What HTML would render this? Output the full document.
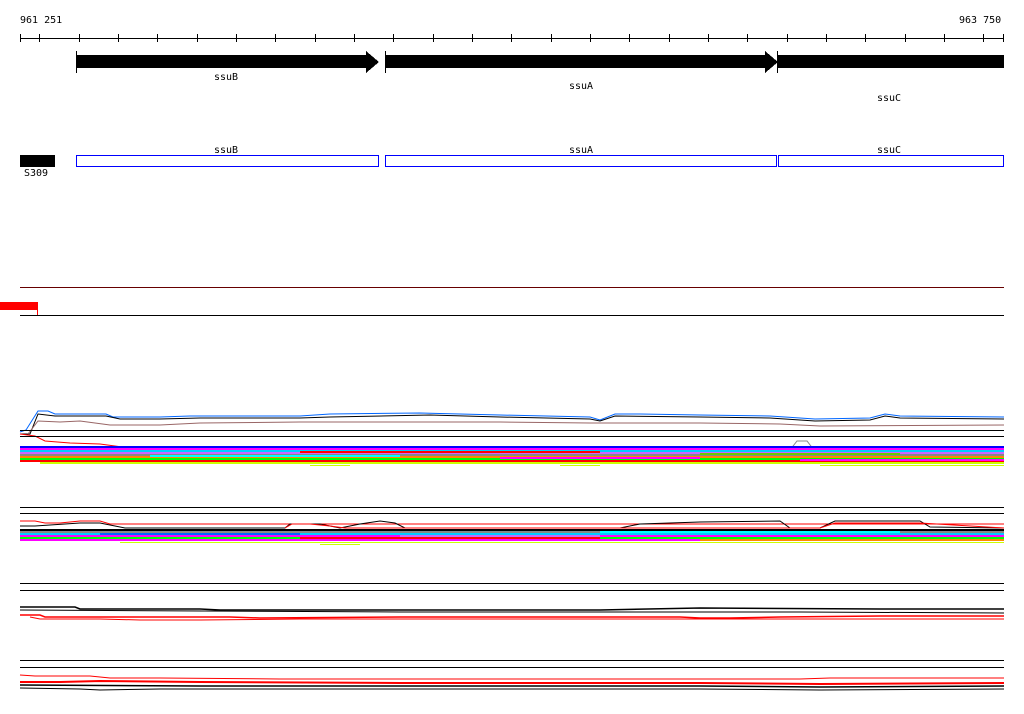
<!DOCTYPE html>
<html><head><meta charset="utf-8"><style>
html,body{margin:0;padding:0;background:#fff;width:1024px;height:714px;overflow:hidden}
svg{display:block}
text{font-family:"DejaVu Sans Mono","Liberation Mono",monospace;font-size:10px;fill:#000}
</style></head><body>
<svg width="1024" height="714" xmlns="http://www.w3.org/2000/svg" shape-rendering="crispEdges">
<text x="20" y="23">961 251</text>
<text x="959" y="23">963 750</text>
<line x1="20" y1="38.5" x2="1004" y2="38.5" stroke="#000"/>
<g stroke="#000">
<line x1="20.5" y1="34" x2="20.5" y2="42"/><line x1="39.5" y1="34" x2="39.5" y2="42"/>
<line x1="79.5" y1="34" x2="79.5" y2="42"/><line x1="118.5" y1="34" x2="118.5" y2="42"/>
<line x1="157.5" y1="34" x2="157.5" y2="42"/><line x1="197.5" y1="34" x2="197.5" y2="42"/>
<line x1="236.5" y1="34" x2="236.5" y2="42"/><line x1="275.5" y1="34" x2="275.5" y2="42"/>
<line x1="315.5" y1="34" x2="315.5" y2="42"/><line x1="354.5" y1="34" x2="354.5" y2="42"/>
<line x1="393.5" y1="34" x2="393.5" y2="42"/><line x1="433.5" y1="34" x2="433.5" y2="42"/>
<line x1="472.5" y1="34" x2="472.5" y2="42"/><line x1="511.5" y1="34" x2="511.5" y2="42"/>
<line x1="551.5" y1="34" x2="551.5" y2="42"/><line x1="590.5" y1="34" x2="590.5" y2="42"/>
<line x1="629.5" y1="34" x2="629.5" y2="42"/><line x1="669.5" y1="34" x2="669.5" y2="42"/>
<line x1="708.5" y1="34" x2="708.5" y2="42"/><line x1="747.5" y1="34" x2="747.5" y2="42"/>
<line x1="787.5" y1="34" x2="787.5" y2="42"/><line x1="826.5" y1="34" x2="826.5" y2="42"/>
<line x1="865.5" y1="34" x2="865.5" y2="42"/><line x1="905.5" y1="34" x2="905.5" y2="42"/>
<line x1="944.5" y1="34" x2="944.5" y2="42"/><line x1="983.5" y1="34" x2="983.5" y2="42"/>
<line x1="1003.5" y1="34" x2="1003.5" y2="42"/>
</g>
<!-- genes -->
<line x1="76.5" y1="51" x2="76.5" y2="73" stroke="#000"/>
<polygon points="76,55 366,55 366,51 379,62 366,73 366,68 76,68" fill="#000"/>
<line x1="385.5" y1="51" x2="385.5" y2="73" stroke="#000"/>
<polygon points="385,55 765,55 765,51 778,62 765,73 765,68 385,68" fill="#000"/>
<line x1="777.5" y1="51" x2="777.5" y2="73" stroke="#000"/>
<rect x="777" y="55" width="227" height="13" fill="#000"/>
<text x="214" y="80">ssuB</text>
<text x="569" y="89">ssuA</text>
<text x="877" y="101">ssuC</text>
<text x="214" y="153">ssuB</text>
<text x="569" y="153">ssuA</text>
<text x="877" y="153">ssuC</text>
<g fill="none" stroke="#00f">
<rect x="76.5" y="155.5" width="302" height="11"/>
<rect x="385.5" y="155.5" width="391" height="11"/>
<rect x="778.5" y="155.5" width="225" height="11"/>
</g>
<rect x="20" y="155" width="35" height="12" fill="#000"/>
<text x="24" y="176">S309</text>
<line x1="20" y1="287.5" x2="1004" y2="287.5" stroke="#600"/>
<rect x="0" y="302" width="38" height="8" fill="#f00"/>
<line x1="37.5" y1="302" x2="37.5" y2="315" stroke="#f00"/>
<line x1="20" y1="315.5" x2="1004" y2="315.5" stroke="#000"/>
<!-- graph 1 -->
<g fill="none" shape-rendering="auto" stroke-width="1">
<polyline stroke="#06f" points="20,432 26,430 38,411 48,411 55,414 106,414 113,417 160,417 190,416 300,416 330,414 420,413 500,415 590,417 600,420 615,414 640,414 700,415 770,416 815,419 870,418 885,414 900,416 1004,417"/>
<polyline stroke="#000" points="20,434 30,434 38,414 55,416 106,416 120,419 160,419 200,418 300,418 330,417 430,415 500,417 590,419 600,421 615,416 700,417 770,418 815,421 870,420 885,416 900,418 1004,419"/>
<polyline stroke="#966" points="28,434 38,421 60,422 80,421 110,425 160,425 200,423 300,422 500,422 590,423 700,423 780,424 820,426 1004,425"/>
<polyline stroke="#f00" points="20,434 35,436 45,441 70,443 100,444 130,448 200,450 300,451 380,451 500,452 700,452 800,453 1004,453"/>
<polyline stroke="#888" points="790,450 797,441 807,441 814,450"/>
</g>
<line x1="20" y1="430.5" x2="1004" y2="430.5" stroke="#000"/>
<line x1="20" y1="436.5" x2="1004" y2="436.5" stroke="#000"/>
<g stroke-width="2">
<line x1="20" y1="447" x2="1004" y2="447" stroke="#00f"/>
<line x1="20" y1="449" x2="1004" y2="449" stroke="#f0f"/>
<line x1="20" y1="451" x2="1004" y2="451" stroke="#0cf"/>
<line x1="20" y1="453" x2="1004" y2="453" stroke="#c6f"/>
<line x1="20" y1="455" x2="1004" y2="455" stroke="#888"/>
<line x1="20" y1="457" x2="1004" y2="457" stroke="#f80"/>
<line x1="20" y1="459" x2="1004" y2="459" stroke="#0f0"/>
<line x1="20" y1="461" x2="1004" y2="461" stroke="#f00"/>
<line x1="150" y1="456" x2="400" y2="456" stroke="#0ff"/>
<line x1="500" y1="458" x2="700" y2="458" stroke="#f0f"/>
<line x1="700" y1="454" x2="900" y2="454" stroke="#6c0"/>
<line x1="300" y1="452" x2="600" y2="452" stroke="#f00"/>
<line x1="800" y1="460" x2="1004" y2="460" stroke="#f0f"/>
<line x1="40" y1="463" x2="1004" y2="463" stroke="#cf0"/>
</g>
<line x1="310" y1="465.5" x2="350" y2="465.5" stroke="#cf0"/>
<line x1="560" y1="465.5" x2="600" y2="465.5" stroke="#cf0"/>
<line x1="820" y1="465.5" x2="1004" y2="465.5" stroke="#cf0"/>
<!-- graph 2 -->
<line x1="20" y1="507.5" x2="1004" y2="507.5" stroke="#000"/>
<line x1="20" y1="513.5" x2="1004" y2="513.5" stroke="#000"/>
<g fill="none" shape-rendering="auto">
<polyline stroke="#f00" points="20,521 35,521 45,523 60,523 80,521 100,521 110,524 1004,524"/>
<polyline stroke="#000" points="20,526 35,526 80,523 100,523 115,526 125,528 285,528 290,524 320,524 340,528 360,524 380,521 395,523 405,528 620,528 640,524 700,522 780,521 790,528 820,528 835,521 920,521 930,527 1004,528"/>
<polyline stroke="#f00" points="285,528 292,524 310,524 330,526 345,528 620,528 790,528 820,528 835,523 920,523 1004,528"/>
</g>
<g stroke-width="2">
<line x1="20" y1="530" x2="1004" y2="530" stroke="#000"/>
<line x1="20" y1="532" x2="1004" y2="532" stroke="#888"/>
<line x1="20" y1="534" x2="1004" y2="534" stroke="#0cf"/>
<line x1="20" y1="536" x2="1004" y2="536" stroke="#f0f"/>
<line x1="20" y1="538" x2="1004" y2="538" stroke="#0f0"/>
<line x1="20" y1="540" x2="1004" y2="540" stroke="#f0f"/>
<line x1="100" y1="534" x2="300" y2="534" stroke="#06f"/>
<line x1="300" y1="538" x2="600" y2="538" stroke="#f00"/>
<line x1="600" y1="532" x2="900" y2="532" stroke="#0ff"/>
<line x1="700" y1="540" x2="1004" y2="540" stroke="#f80"/>
<line x1="400" y1="536" x2="600" y2="536" stroke="#c6f"/>
</g>
<line x1="120" y1="542.5" x2="1004" y2="542.5" stroke="#cf0"/>
<line x1="320" y1="544.5" x2="360" y2="544.5" stroke="#cf0"/>
<!-- graph 3 -->
<line x1="20" y1="583.5" x2="1004" y2="583.5" stroke="#000"/>
<line x1="20" y1="590.5" x2="1004" y2="590.5" stroke="#000"/>
<g fill="none" shape-rendering="auto">
<polyline stroke="#000" stroke-width="1.5" points="20,607 75,607 80,609 200,609 220,610 600,610 700,608 880,609 1004,609"/>
<polyline stroke="#000" points="20,610 400,612 800,612 1004,613"/>
<polyline stroke="#f00" stroke-width="1.5" points="20,615 40,615 45,617 230,617 260,618 400,617 600,617 680,617 700,618 730,618 780,617 880,616 1004,616"/>
<polyline stroke="#f00" points="30,617 40,619 100,619 140,620 200,620 300,619 500,619 700,619 1004,619"/>
</g>
<!-- graph 4 -->
<line x1="20" y1="660.5" x2="1004" y2="660.5" stroke="#000"/>
<line x1="20" y1="667.5" x2="1004" y2="667.5" stroke="#000"/>
<g fill="none" shape-rendering="auto">
<polyline stroke="#f00" points="20,675 35,676 90,676 110,678 160,678 280,679 500,679 800,679 830,678 900,678 1004,678"/>
<polyline stroke="#f00" stroke-width="2" points="20,682 60,682 100,681 200,682 400,683 700,683 820,684 1004,683"/>
<polyline stroke="#000" stroke-width="1.5" points="20,685 200,686 400,686 700,686 820,687 1004,686"/>
<polyline stroke="#000" points="20,688 80,689 100,690 160,689 300,689 700,689 820,690 1004,689"/>
</g>
</svg>
</body></html>
